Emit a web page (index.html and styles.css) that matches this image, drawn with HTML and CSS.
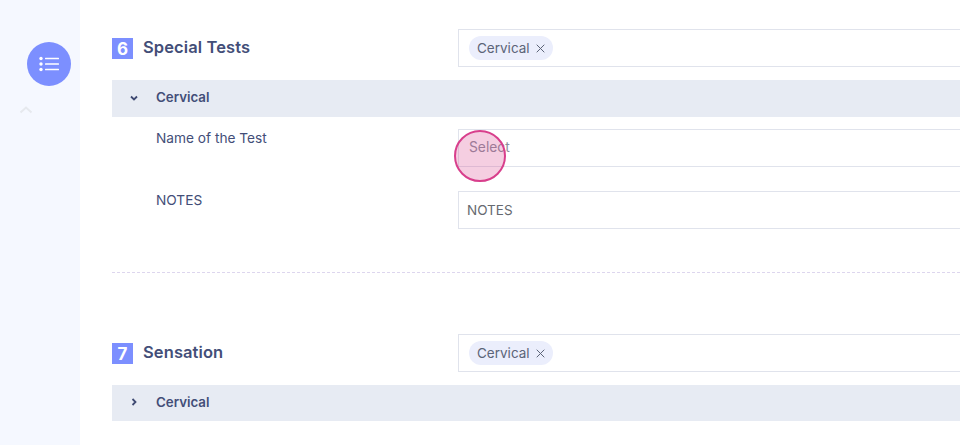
FILE: index.html
```html
<!DOCTYPE html>
<html lang="en">
<head>
<meta charset="utf-8">
<title>Assessment</title>
<link rel="stylesheet" href="styles.css">
</head>
<body>
<div class="page">
  <aside class="sidebar">
    <button class="fab" aria-label="Sections">
      <svg width="20" height="16" viewBox="0 0 20 16"><g fill="#fff"><circle cx="2" cy="2.500" r="1.700"/><circle cx="2" cy="8" r="1.700"/><circle cx="2" cy="13.500" r="1.700"/><rect x="6" y="1.700" width="14" height="1.600" rx=".5"/><rect x="6" y="7.200" width="14" height="1.600" rx=".5"/><rect x="6" y="12.700" width="14" height="1.600" rx=".5"/></g></svg>
    </button>
    <svg class="up" width="14" height="8" viewBox="0 0 14 8"><path d="M1.500 6.500 7 1.500l5.500 5" fill="none" stroke="#e6e9ee" stroke-width="2"/></svg>
  </aside>
  <main class="main">
    <section class="section first">
      <div class="head">
        <div class="title"><span class="num">6</span><h2>Special Tests</h2></div>
        <div class="field"><span class="tag">Cervical<svg class="x" width="9" height="9" viewBox="0 0 9 9"><path d="M.7.7l7.600 7.600M8.300.7.700 8.300" stroke="#5c6478" stroke-width="1" fill="none"/></svg></span></div>
      </div>
      <div class="bar open">
        <svg class="chev" width="8" height="6" viewBox="0 0 8 6"><path d="M1 1.500 4 4.500l3-3" fill="none" stroke="#3f4a72" stroke-width="1.800"/></svg>
        <span>Cervical</span>
      </div>
      <div class="row"><label>Name of the Test</label><div class="field plain"><span class="ph">Select</span></div></div>
      <div class="row second"><label>NOTES</label><div class="field plain notes"><span>NOTES</span></div></div>
    </section>
    <section class="section">
      <div class="head">
        <div class="title"><span class="num">7</span><h2>Sensation</h2></div>
        <div class="field"><span class="tag">Cervical<svg class="x" width="9" height="9" viewBox="0 0 9 9"><path d="M.7.7l7.600 7.600M8.300.7.700 8.300" stroke="#5c6478" stroke-width="1" fill="none"/></svg></span></div>
      </div>
      <div class="bar closed">
        <svg class="chev" width="6" height="8" viewBox="0 0 6 8"><path d="M1.500 1 4.500 4l-3 3" fill="none" stroke="#3f4a72" stroke-width="1.800"/></svg>
        <span>Cervical</span>
      </div>
    </section>
  </main>
  <div class="touch"></div>
</div>
</body>
</html>
```
FILE: styles.css
```css
* { box-sizing: border-box; }
html, body { margin: 0; height: 100%; overflow: hidden; background: #fff; }
body { font-family: Inter, "Open Sans", sans-serif; color: #3f4a72; }
.page { position: relative; display: flex; width: 960px; height: 445px; overflow: hidden; }
.sidebar { flex: 0 0 80px; background: #f5f8ff; display: flex; flex-direction: column; align-items: flex-start; padding: 42px 0 0 27px; gap: 20px; }
.fab { width: 44px; height: 44px; border: 0; border-radius: 50%; padding: 0; background: #7c8fff; display: flex; align-items: center; justify-content: center; flex: none; }
.up { margin-left: -8px; flex: none; }
.main { flex: 0 0 1000px; padding: 29px 0 0 32px; }
.section.first { height: 244px; border-bottom: 1px dashed #ddd6ee; margin-bottom: 61px; }
.head { display: flex; height: 38px; margin-bottom: 13px; }
.title { flex: 0 0 346px; display: flex; align-items: flex-start; gap: 10px; padding-top: 8px; }
.num { width: 21px; height: 21px; margin-top: 1px; background: #7c8fff; color: #fff; font-size: 17px; font-weight: 700; line-height: 22px; text-align: center; }
h2 { margin: 0; font-size: 16.500px; line-height: 20px; font-weight: 600; color: #434e78; letter-spacing: .1px; }
.field { flex: 1; height: 38px; border: 1px solid #e0e3ec; background: #fff; display: flex; align-items: center; padding-left: 10px; }
.tag { display: inline-flex; align-items: center; gap: 6px; height: 24px; padding: 0 8px; border-radius: 12px; background: #ebeefc; color: #5c6478; font-size: 13.500px; }
.bar { display: flex; align-items: center; height: 37px; background: #e7ebf3; font-size: 13.300px; font-weight: 600; color: #434e78; padding: 0 0 2px 18px; }
.bar.closed { height: 36px; padding-left: 19px; }
.bar .chev { flex: 0 0 auto; margin-right: 19px; }
.bar.open .chev { margin-right: 18px; }
.bar.open span { margin-bottom: 2px; }
.row { display: flex; margin-top: 12px; height: 38px; }
.row.second { margin-top: 24px; }
.row label { flex: 0 0 346px; padding: 0 0 0 44px; font-size: 13.700px; line-height: 18px; color: #434e78; }
.plain { font-size: 13.800px; padding-bottom: 2px; }
.ph { color: #8a8f9c; }
.notes { padding: 0 0 0 8px; font-size: 13.500px; color: #666a70; }
.touch { position: absolute; left: 454px; top: 130px; width: 52px; height: 52px; border-radius: 50%; background: rgba(214, 60, 135, .25); border: 2px solid #d83f8c; }
```
